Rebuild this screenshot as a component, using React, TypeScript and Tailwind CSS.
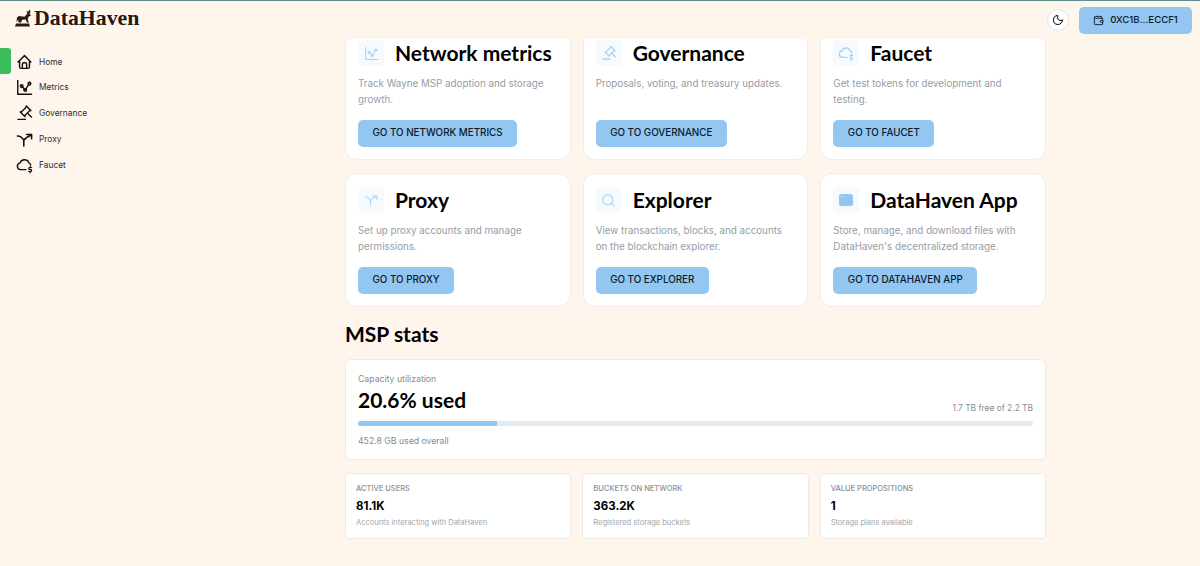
import { Moon, Wallet, Search } from "lucide-react";
import { TbHome } from "react-icons/tb";
import { RiAuctionLine } from "react-icons/ri";
import type { ReactNode } from "react";

const CloudCoin = ({ size = 18, className = "" }: { size?: number; className?: string }) => (
  <svg width={size} height={size} viewBox="0 0 24 24" fill="none" stroke="currentColor" strokeWidth={2} strokeLinecap="round" strokeLinejoin="round" className={className}>
    <path d="M14 18.5H6.5A4.8 4.8 0 0 1 5.8 9 6.5 6.5 0 0 1 18 8.6 4.6 4.6 0 0 1 20.8 12" />
    <path d="M22 15.5h-2.6a1.3 1.3 0 0 0 0 2.8h1.3a1.3 1.3 0 0 1 0 2.8H18M20 14v1.5M20 21.1V23" strokeWidth={1.7} />
  </svg>
);

const ProxyIcon = ({ size = 18, strokeWidth = 2.2 }: { size?: number; strokeWidth?: number }) => (
  <svg width={size} height={size} viewBox="0 0 24 24" fill="none" stroke="currentColor" strokeWidth={strokeWidth} strokeLinecap="round" strokeLinejoin="round">
    <path d="M2 7c4 0 7 2 9 6M11 21v-8c2-3 5-5 10-7M15 5h7v6" />
  </svg>
);

const MetricsIcon = ({ size = 18, strokeWidth = 2 }: { size?: number; strokeWidth?: number }) => (
  <svg width={size} height={size} viewBox="0 0 24 24" fill="none" stroke="currentColor" strokeWidth={strokeWidth} strokeLinecap="round" strokeLinejoin="round">
    <path d="M2.5 2v19.5H22" />
    <path d="M8 10l5 5.5L18.5 7" />
    <circle cx="8" cy="10" r="1.9" />
    <circle cx="13" cy="15.5" r="1.9" />
    <circle cx="19" cy="6.5" r="1.9" />
  </svg>
);

const AppIcon = () => (
  <svg width="14" height="12" viewBox="0 0 14 12">
    <rect width="14" height="12" rx="2.5" fill="#93c5f0" />
    <path d="M1.5 3h5" stroke="#b7d9f6" strokeWidth="1" />
  </svg>
);

const nav: { label: string; icon: ReactNode }[] = [
  { label: "Home", icon: <TbHome size={18} /> },
  { label: "Metrics", icon: <MetricsIcon size={17} /> },
  { label: "Governance", icon: <RiAuctionLine size={18} /> },
  { label: "Proxy", icon: <ProxyIcon size={17} /> },
  { label: "Faucet", icon: <CloudCoin size={18} /> },
];

const cards = [
  { t: "Network metrics", d: "Track Wayne MSP adoption and storage growth.", b: "GO TO NETWORK METRICS", i: <MetricsIcon size={15} strokeWidth={1.6} /> },
  { t: "Governance", d: "Proposals, voting, and treasury updates.", b: "GO TO GOVERNANCE", i: <RiAuctionLine size={16} /> },
  { t: "Faucet", d: "Get test tokens for development and testing.", b: "GO TO FAUCET", i: <CloudCoin size={16} /> },
  { t: "Proxy", d: "Set up proxy accounts and manage permissions.", b: "GO TO PROXY", i: <ProxyIcon size={14} strokeWidth={1.8} /> },
  { t: "Explorer", d: "View transactions, blocks, and accounts on the blockchain explorer.", b: "GO TO EXPLORER", i: <Search size={15} /> },
  { t: "DataHaven App", d: "Store, manage, and download files with DataHaven's decentralized storage.", b: "GO TO DATAHAVEN APP", i: <AppIcon /> },
];

const stats = [
  { l: "ACTIVE USERS", v: "81.1K", s: "Accounts interacting with DataHaven" },
  { l: "BUCKETS ON NETWORK", v: "363.2K", s: "Registered storage buckets" },
  { l: "VALUE PROPOSITIONS", v: "1", s: "Storage plans available" },
];

export default function App() {
  return (
    <div className="h-[566px] w-[1200px] overflow-hidden flex flex-col bg-[#fef5ec] font-['Inter',sans-serif] text-black">
      <header className="h-[39px] shrink-0 border-t border-[#5f8f88] flex items-center justify-between pl-[15px] pr-[8px]">
        <div className="flex items-center gap-[1px] text-[#241a10] -mt-[3px]">
          <svg width="18" height="18" viewBox="0 0 18 18" fill="#2a1c10">
            <path d="M1.5 13.5l.5-5 2-1.5 5.5.8 2-2.3 1-1.2-1.2-2.5 2.2 1 .8-2.5 1.2 2.2-.8 2.3 1.3 2-2.3.8-1 3 1.2 2.9h-2l-1.2-3-3.7.2-.8 2.8H3.5l-.2-3z" />
            <path d="M1 14.5h13l1 3H0z" />
          </svg>
          <span className="font-['Liberation_Serif',serif] font-bold text-[21.8px] leading-none">DataHaven</span>
        </div>
        <div className="flex items-center gap-[10px]">
          <button className="w-[22px] h-[22px] rounded-full bg-white border border-[#e5e7eb] flex items-center justify-center">
            <Moon size={12} strokeWidth={2} />
          </button>
          <button className="h-[27px] w-[113px] rounded-[5px] bg-[#93c7f2] flex items-center justify-center gap-[6px] text-[9.6px] font-medium text-[#0b1a2a]">
            <Wallet size={11} />
            <span>0XC1B...ECCF1</span>
          </button>
        </div>
      </header>
      <div className="flex flex-1 min-h-0">
        <aside className="w-[345px] shrink-0 pt-[10px]">
          <nav className="flex flex-col">
            {nav.map((n, i) => (
              <div key={n.label} className="relative h-[25.8px] flex items-center pl-[16px] gap-[6px] text-[#15110e]">
                {i === 0 && <span className="absolute left-0 -top-[1px] w-[11px] h-[26px] rounded-r-[3px] bg-[#3dbd5d]" />}
                <span className="w-[17px] flex justify-center">{n.icon}</span>
                <span className="text-[8.4px] leading-none text-[#2e2e2e]">{n.label}</span>
              </div>
            ))}
          </nav>
        </aside>
        <main className="w-[701px] shrink-0 overflow-hidden">
          <div className="-mt-[13px]">
            <div className="grid grid-cols-3 gap-x-[12px] gap-y-[13px]">
              {cards.map((c) => (
                <div key={c.t} className="h-[134px] bg-white rounded-[12px] border border-[#f1ece6] px-[12px] pt-[13px] flex flex-col items-start">
                  <div className="flex items-center gap-[11px] h-[26px]">
                    <span className="w-[26px] h-[26px] rounded-[5px] bg-[#f5fafe] text-[#a9d3f3] flex items-center justify-center">{c.i}</span>
                    <h3 className="-mt-[2px] font-['Lato',sans-serif] font-bold text-[21px] leading-none whitespace-nowrap">{c.t}</h3>
                  </div>
                  <p className="mt-[10px] min-h-[32px] text-[9.8px] leading-[16px] text-[#969ca6]">{c.d}</p>
                  <button className="mt-[12px] h-[27px] px-[14.5px] rounded-[5px] bg-[#93c7f2] text-[9.8px] font-medium text-[#0b1a2a] whitespace-nowrap">{c.b}</button>
                </div>
              ))}
            </div>
            <h2 className="mt-[15px] font-['Lato',sans-serif] font-bold text-[21px] leading-[24px]">MSP stats</h2>
            <section className="mt-[13px] h-[101px] bg-white rounded-[6px] border border-[#efe9e2] px-[12px] pt-[13px]">
              <div className="text-[8.7px] leading-[12px] text-[#858b94]">Capacity utilization</div>
              <div className="flex items-end justify-between">
                <div className="font-['Lato',sans-serif] font-bold text-[21px] leading-[29px]">20.6% used</div>
                <div className="text-[8.4px] leading-[12px] text-[#858b94]">1.7 TB free of 2.2 TB</div>
              </div>
              <div className="mt-[7px] h-[5px] rounded-full bg-[#e5eaef] overflow-hidden">
                <div className="h-full bg-[#93c7f2]" style={{ width: "20.6%" }} />
              </div>
              <div className="mt-[9px] text-[8.7px] leading-[12px] text-[#858b94]">452.8 GB used overall</div>
            </section>
            <div className="mt-[13px] grid grid-cols-3 gap-[11px]">
              {stats.map((s) => (
                <div key={s.l} className="h-[66px] bg-white rounded-[4px] border border-[#efe9e2] px-[10px] pt-[9px]">
                  <div className="text-[7.5px] leading-[12px] font-medium text-[#8a8f97]">{s.l}</div>
                  <div className="mt-[3px] text-[11.5px] leading-[16px] font-bold">{s.v}</div>
                  <div className="mt-[3px] text-[7.5px] leading-[12px] text-[#a0a5ad]">{s.s}</div>
                </div>
              ))}
            </div>
          </div>
        </main>
      </div>
    </div>
  );
}
